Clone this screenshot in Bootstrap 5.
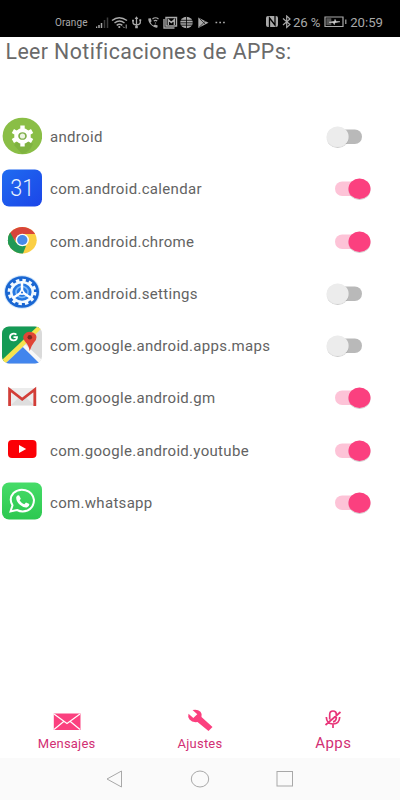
<!DOCTYPE html>
<html lang="es">
<head>
<meta charset="utf-8">
<meta name="viewport" content="width=device-width, initial-scale=1">
<title>Leer Notificaciones</title>
<link href="https://cdn.jsdelivr.net/npm/bootstrap@5.3.0/dist/css/bootstrap.min.css" rel="stylesheet">
<style>
body{font-family:Roboto,"Liberation Sans",sans-serif;color:#636363;background:#fff}
svg{display:block;flex:none}
.screen{width:400px;height:800px;overflow:hidden}
.statusbar{height:37px;background:#000;color:#a9a9a9;padding:8px 17px 0 55px}
.carrier{font-size:10px;width:41px;letter-spacing:.1px;white-space:nowrap}
.st{font-size:13.2px;white-space:nowrap}
.st-clock{margin-left:2px}
.st-charge{margin-left:1px;letter-spacing:-.15px}
.heading{height:74px;padding:1px 0 0 5.5px;font-size:21.3px;line-height:28px;letter-spacing:.41px;font-weight:400;margin:0;white-space:nowrap;color:#6a6a6a}
.approw{height:52.25px;padding:0 29px 0 2px}
.appicon{width:40px;height:40px;margin-top:-3px}
.appname{margin-left:8px;font-size:15px;letter-spacing:.31px;line-height:20px;white-space:nowrap}
.tabs{height:59.5px;color:#d22f74}
.tab{width:133.33px}
.tab span{font-size:13px;line-height:16px;letter-spacing:.22px;margin-top:5px}
.tab .lg{font-size:15px;letter-spacing:.5px;margin-top:4px}
.softkeys{height:42px;background:#fafafa;padding:0 106px}
</style>
<script src="https://cdn.jsdelivr.net/npm/bootstrap@5.3.0/dist/js/bootstrap.bundle.min.js"></script>
</head>
<body>
<svg width="0" height="0" class="position-absolute" aria-hidden="true">
<defs>
<linearGradient id="cal" x1="0" y1="0" x2="1" y2="1"><stop offset="0" stop-color="#1f6cf0"/><stop offset="1" stop-color="#1c45e8"/></linearGradient>
<linearGradient id="wa" x1="0" y1="0" x2="0" y2="1"><stop offset="0" stop-color="#46dc68"/><stop offset="1" stop-color="#2dc850"/></linearGradient>
<clipPath id="mapclip"><rect y="1.5" width="40" height="37" rx="7"/></clipPath>
<clipPath id="chromeclip"><ellipse cx="20.3" cy="20.2" rx="14.4" ry="13.2"/></clipPath>
<filter id="sh" x="-30%" y="-30%" width="160%" height="170%"><feDropShadow dx="0" dy=".8" stdDeviation=".7" flood-opacity=".25"/></filter>
<symbol id="off" viewBox="0 0 46 26"><rect x="7" y="5.5" width="30" height="14.5" rx="7.2" fill="#b9b9b9"/><ellipse cx="12.7" cy="12.8" rx="11" ry="10.3" fill="#ececec" filter="url(#sh)"/></symbol>
<symbol id="on" viewBox="0 0 46 26"><rect x="10" y="5.5" width="30" height="14.5" rx="7.2" fill="#fdc3d7"/><ellipse cx="34.5" cy="12.8" rx="11" ry="10.3" fill="#fb407f" filter="url(#sh)"/></symbol>
</defs>
</svg>
<div class="screen d-flex flex-column">
  <header class="statusbar d-flex align-items-center">
    <span class="carrier">Orange</span>
    <svg width="130" height="16" viewBox="96 15 130 16" fill="none" stroke="#a9a9a9" stroke-width="1.3">
      <path d="M96.5 28v-1.5M99 28v-3M101.5 28v-5" stroke-width="1.5"/><path d="M104.5 28v-8M107.5 28V17.5" stroke="#3d3d3d" stroke-width="1.5"/>
      <path d="M112 20.5Q119 15 127 20.5M114.5 23Q119.5 19 124.5 23M116.7 25.3q2.8-2 5.6 0" stroke-width="1.5"/><circle cx="119.3" cy="27" r="1.1" fill="#a9a9a9" stroke="none"/><path d="M123 26.5l1.5 1.5M126.2 24.5v4" stroke-width="1"/>
      <path d="M136.5 17v10M133 20.5v2.2q0 1.8 3.5 2.3 3.8-.5 3.8-2.5V20"/><path d="M134.7 19l1.8-2.8 1.8 2.8zM132 19.7h2v1.7h-2zM139.4 19.3h1.8V21h-1.8zM135.2 26h2.6v2.3h-2.6z" fill="#a9a9a9" stroke="none"/>
      <path d="M148.3 18.5l2.5-.3.8 3-1 1.2q1 2.3 3 3.2l1.3-1.1 2.8.9-.3 2.2q-2.7.7-5.8-2.3-3.6-3.3-3.3-6.8z" fill="#a9a9a9" stroke="none"/><path d="M152.5 19q3-2.500 6 0M153.800 21q1.700-1.300 3.400 0M155.500 22.500v1" stroke-width="1.200"/>
      <path d="M166 17.5h10.500v8.500H166zM164 19v9h10.500" stroke-width="1.400"/><path d="M168.300 25v-5.300l3 2.800 3-2.800V25" stroke-width="1.400"/>
      <ellipse cx="186.500" cy="22.500" rx="6.300" ry="5.800" fill="#a9a9a9" stroke="none"/><path d="M180 20.300h13M180 22.800h13M180 25.200h13M186.500 16.500v12" stroke="#000" stroke-width=".8"/>
      <path d="M198.300 17.500l10.200 5.200-10.200 5.300z" fill="#a9a9a9" stroke="none"/><path d="M199.500 18.500l6 6M199.500 27l6-6" stroke="#222" stroke-width=".8"/>
      <path d="M215.500 22.500h1.700M219.300 22.500h1.700M223.100 22.500h1.700" stroke-width="1.700"/>
    </svg>
    <div class="d-flex align-items-center ms-auto">
    <svg width="26" height="14" viewBox="266 16 26 14" fill="none" stroke="#a9a9a9">
      <path d="M268 17h8q2 0 2 2v7q0 2-2 2h-8q-2 0-2-2v-7q0-2 2-2z" fill="#a9a9a9" stroke="none"/><path d="M269.500 28V19l5.500 7V17" stroke="#000" stroke-width="1.300"/><path d="M283 19.500l7 6-3.300 3V17l3.300 3-7 6" stroke-width="1.200"/>
    </svg>
    <span class="st st-charge">26 %</span>
    <svg width="24" height="12" viewBox="324 16.500 24 12" class="ms-1"><path d="M325 17.500h18v9.500h-18zM345.800 20v4.500" fill="none" stroke="#a9a9a9" stroke-width="1.200"/><path d="M326.300 18.700h5v7h-5z" fill="#555"/><path d="M329 22.800l5.500-1 .5-2 1 2.100 4 .3-5.200 1-.5 2-1-2z" fill="#ddd" stroke="#ccc" stroke-width=".5"/></svg>
    <span class="st st-clock">20:59</span>
    </div>
  </header>
  <h1 class="heading">Leer Notificaciones de APPs:</h1>
  <main class="flex-grow-1">
    <div class="approw d-flex align-items-center">
      <svg class="appicon" viewBox="0 0 40 40"><ellipse cx="20.400" cy="20" rx="19.800" ry="18.300" fill="#8abe46"/><path d="M12 29l8-8 11 7q-3 8-11 10z" fill="#7fb240"/><ellipse cx="20.500" cy="20" rx="6.300" ry="5.800" fill="#7dae49" stroke="#fff" stroke-width="4"/><path d="M20.500 9.500v4M20.500 26.500v4M10.900 15l3.400 2M26.700 23l3.400 2M10.900 25l3.400-2M26.700 17l3.400-2" stroke="#fff" stroke-width="4.400"/><circle cx="20.500" cy="20" r="2.600" fill="#edf5e3"/></svg>
      <span class="appname">android</span><svg class="ms-auto" width="46" height="26"><use href="#off"/></svg>
    </div>
    <div class="approw d-flex align-items-center">
      <svg class="appicon" viewBox="0 0 40 40"><rect y="1.500" width="40" height="37" rx="7" fill="url(#cal)"/><text x="20.300" y="27.700" text-anchor="middle" font-size="23" font-weight="300" fill="#e9f4ff" textLength="24" lengthAdjust="spacingAndGlyphs">31</text></svg>
      <span class="appname">com.android.calendar</span><svg class="ms-auto" width="46" height="26"><use href="#on"/></svg>
    </div>
    <div class="approw d-flex align-items-center">
      <svg class="appicon" viewBox="0 0 40 40"><g clip-path="url(#chromeclip)"><path d="M0 0h40v40H0z" fill="#fbcf44"/><path d="M4 8l10 15 10 3-6 15H0z" fill="#229955"/><path d="M5 13L10 4h29v10H20l-6 7z" fill="#d8453a"/><path d="M4 9l4 3 6 11-8 2z" fill="#229955"/></g><ellipse cx="20.300" cy="20" rx="6.600" ry="6.200" fill="#fff"/><ellipse cx="20.300" cy="20" rx="5.200" ry="4.900" fill="#478ae8"/></svg>
      <span class="appname">com.android.chrome</span><svg class="ms-auto" width="46" height="26"><use href="#on"/></svg>
    </div>
    <div class="approw d-flex align-items-center">
      <svg class="appicon" viewBox="0 0 40 40"><ellipse cx="20" cy="20" rx="18" ry="16.800" fill="#cfe5fb"/><ellipse cx="20" cy="20" rx="17" ry="15.800" fill="#1966d2"/><ellipse cx="20" cy="20" rx="10.800" ry="9.900" fill="#2578e2" stroke="#f3faff" stroke-width="2.400"/><ellipse cx="20" cy="20" rx="12.900" ry="11.800" fill="none" stroke="#f3faff" stroke-width="3" stroke-dasharray="3.400 3.070"/><ellipse cx="20" cy="20" rx="6" ry="5.500" fill="none" stroke="#7db8f6" stroke-width="1.600"/><path d="M20 20V9.500M20 20l-9 6M20 20l9 6" stroke="#fff" stroke-width="2.500"/><circle cx="20" cy="20.500" r="2.500" fill="#fff"/><circle cx="20" cy="20.500" r="1" fill="#1966d2"/></svg>
      <span class="appname">com.android.settings</span><svg class="ms-auto" width="46" height="26"><use href="#off"/></svg>
    </div>
    <div class="approw d-flex align-items-center">
      <svg class="appicon" viewBox="0 0 40 40"><g clip-path="url(#mapclip)"><path d="M0 0h40v40H0z" fill="#dadada"/><path d="M0 0h40L0 38z" fill="#149a55"/><path d="M0 35L37 0h6L2 40H0z" fill="#f6e34f"/><path d="M3 39l18-17 19 18z" fill="#4285ed"/><path d="M21 22l2.500-2.500L40 35v6z" fill="#f7f7f7"/></g><path d="M27.700 26q-.6-5-4.700-9.400-3.400-4.400-.4-7.700 2.500-2.500 6-2 5.400.8 5.900 5 .2 2.500-2.500 5.500-3 3.500-4.300 8.600z" fill="#e04436"/><circle cx="27.800" cy="12.200" r="2.300" fill="#7c2720"/><path d="M14.400 9.700q-1.700-1.600-4-.9-2.700 1-2.400 3.800.6 2.900 3.700 2.800 3.100-.2 3.300-3.200h-3.500" fill="none" stroke="#fff" stroke-width="1.800"/></svg>
      <span class="appname">com.google.android.apps.maps</span><svg class="ms-auto" width="46" height="26"><use href="#off"/></svg>
    </div>
    <div class="approw d-flex align-items-center">
      <svg class="appicon" viewBox="0 0 40 40"><rect x="6.200" y="11" width="28" height="18" rx="1.500" fill="#ececec"/><path d="M9 28l8.500-8 3 2 3-2 8.500 8" fill="#dedede"/><path d="M7.600 29V12.500L20.200 22.300 32.800 12.500V29" fill="none" stroke="#d23e38" stroke-width="2.800"/></svg>
      <span class="appname">com.google.android.gm</span><svg class="ms-auto" width="46" height="26"><use href="#on"/></svg>
    </div>
    <div class="approw d-flex align-items-center">
      <svg class="appicon" viewBox="0 0 40 40"><rect x="6" y="11" width="28.500" height="18" rx="4" fill="#fb0006"/><path d="M17 16v8l7.200-4z" fill="#fff"/></svg>
      <span class="appname">com.google.android.youtube</span><svg class="ms-auto" width="46" height="26"><use href="#on"/></svg>
    </div>
    <div class="approw d-flex align-items-center">
      <svg class="appicon" viewBox="0 0 40 40"><rect y="1.500" width="40" height="37" rx="7" fill="url(#wa)"/><path d="M8.500 30.500l2-6.200Q6.500 17.500 11.500 12 16.500 7.500 23.500 9.200 31 11.500 32 19 31.800 26.500 25.500 29.500 20 31.500 15 29z" fill="none" stroke="#fff" stroke-width="2"/><path d="M14.200 16.200q1-2.500 3-1.800l1.600 3.400-1.200 1.800q1.900 2.800 4.700 3.700l1.700-1.900 3.400 1.700q0 2.500-2.500 3.300-3.500.5-7-2.600-4-3.700-3.700-7.600z" fill="#fff"/></svg>
      <span class="appname">com.whatsapp</span><svg class="ms-auto" width="46" height="26"><use href="#on"/></svg>
    </div>
  </main>
  <nav class="tabs d-flex">
    <div class="tab d-flex flex-column align-items-center"><svg width="28" height="32" viewBox="0 0 28 32"><path d="M.8 14.500h26.700v16.500H.8z" fill="#fb407f"/><path d="M1 15l13 9.500 13-9.500M1 30.500l10-8.300M27 30.500l-10-8.300" fill="none" stroke="#fff" stroke-width="1.200"/></svg><span>Mensajes</span></div>
    <div class="tab d-flex flex-column align-items-center"><svg width="26" height="32" viewBox="0 0 26 32"><path d="M5.500 11q5-1.200 8 1.800 2 2.500 1 5.300L25.500 28l-4 4L10.500 23q-5.200.8-8-2.500-2-3-1-5.700l4.800 4.200 4-3.800z" fill="#fb407f"/></svg><span>Ajustes</span></div>
    <div class="tab d-flex flex-column align-items-center"><svg width="18" height="32" viewBox="0 0 18 32" fill="none" stroke="#e83478" stroke-width="1.700"><path d="M5.700 20.500v-5q0-3.500 3.300-3.500t3.300 3.500v3.500Q12 22.500 9 22.800M2.300 18q.3 7 6.700 7t6.700-7M9 25v4M1.500 26l15-13"/></svg><span class="lg">Apps</span></div>
  </nav>
  <footer class="softkeys d-flex align-items-center justify-content-between">
    <svg width="18" height="18" viewBox="0 0 18 18" fill="none" stroke="#a8a8a8"><path d="M1 9l14.500-8v16z" stroke-linejoin="round"/></svg>
    <svg width="20" height="18" viewBox="0 0 20 18" fill="none" stroke="#a8a8a8"><ellipse cx="10" cy="9" rx="8.700" ry="8"/></svg>
    <svg width="18" height="18" viewBox="0 0 18 18" fill="none" stroke="#a8a8a8"><rect x="1" y="1.500" width="15.500" height="14.500"/></svg>
  </footer>
</div>
</body>
</html>
